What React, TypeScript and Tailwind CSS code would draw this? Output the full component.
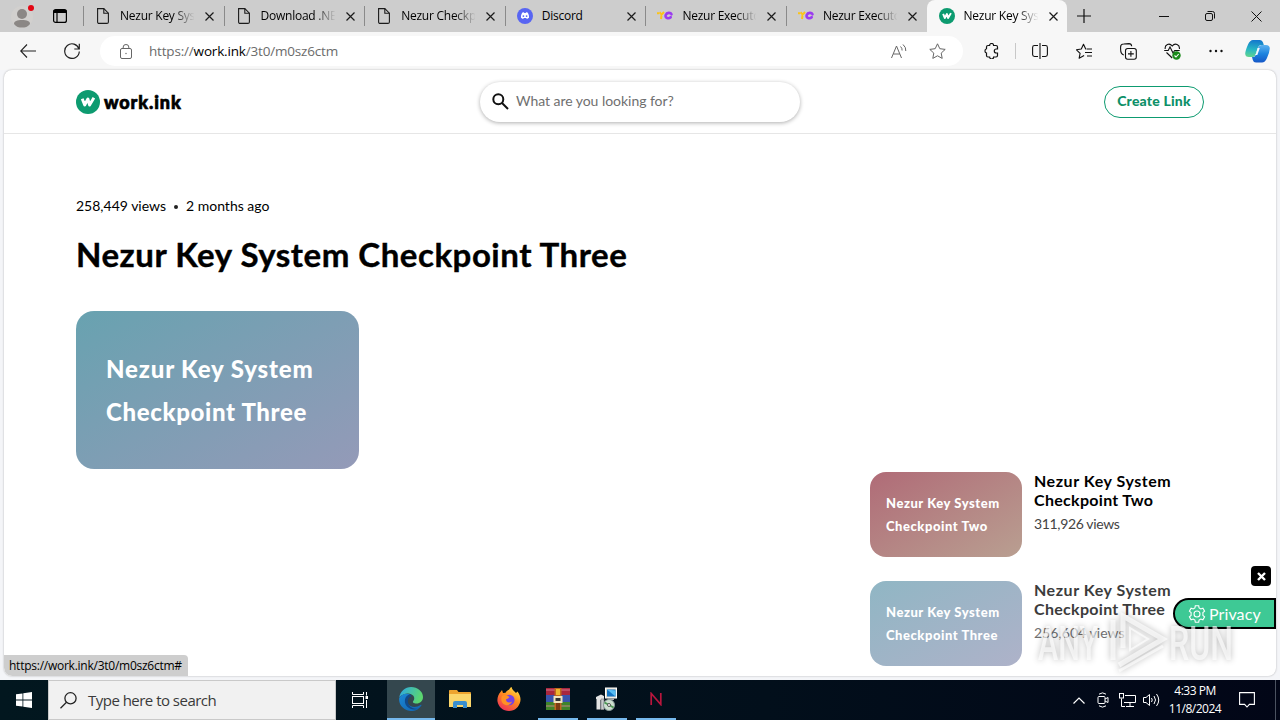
import type { ReactNode } from "react";
import { clsx } from "clsx";

type TabProps = {
    title: string;
    icon: ReactNode;
    active?: boolean;
    noFade?: boolean;
};

type RelatedProps = {
    thumb: [string, string];
    views: string;
    gradient: string;
    faded?: boolean;
};

function PageIcon() {
    return (
        <svg width="12" height="16" viewBox="0 0 12 16" fill="none" stroke="#1b1b1b" strokeWidth="1.1">
            <path d="M.6.6h6.2l4.6 4.6v8.700c0 .9-.6 1.500-1.500 1.500H2.100C1.200 15.400.6 14.800.6 13.900z" />
            <path d="M6.800.6v4.600h4.600" />
        </svg>
    );
}

function DiscordIcon() {
    return (
        <svg width="16" height="16" viewBox="0 0 16 16">
            <circle cx="8" cy="8" r="8" fill="#5865f2" />
            <path
                d="M5.400 4.600 6.900 4.300l.4.6h1.400l.4-.6 1.500.3c1.100 1.700 1.600 3.400 1.400 5.200-.8.7-1.500 1-2.200 1.200l-.5-.9H6.700l-.5.9c-.8-.2-1.500-.5-2.200-1.200-.2-1.800.3-3.500 1.400-5.200z"
                fill="#fff"
            />
            <circle cx="6.400" cy="8.100" r=".9" fill="#5865f2" />
            <circle cx="9.600" cy="8.100" r=".9" fill="#5865f2" />
        </svg>
    );
}

function YcIcon() {
    return (
        <svg width="18" height="12" viewBox="0 0 18 12" fill="none">
            <path d="M1 3.200h2M3.500 2.200l2.200 2.400L8 2M5.600 4.600 5 9" stroke="#fcc419" strokeWidth="2" />
            <path
                d="M15.500 4.300C14.600 2.300 10.800 2.300 9.700 5c-1.100 3 2.900 4.100 5 2.200"
                stroke="#9b3cf0"
                strokeWidth="2.600"
                strokeLinecap="round"
            />
        </svg>
    );
}

function WorkIcon({ size }: { size: number }) {
    return (
        <svg className="shrink-0" width={size} height={size} viewBox="0 0 24 24">
            <circle cx="12" cy="12" r="12" fill="#0d9b70" />
            <path
                d="M6.200 8.800 8.700 15l3.200-6 1.700 6 4.300-7.300"
                fill="none"
                stroke="#fff"
                strokeWidth="2.900"
                strokeLinejoin="round"
            />
        </svg>
    );
}

function CloseGlyph() {
    return (
        <svg width="9" height="9" viewBox="0 0 9 9" stroke="#1b1b1b" strokeWidth="1.200">
            <path d="M.5.5l8 8M8.500.5l-8 8" />
        </svg>
    );
}

function Tab({ title, icon, active, noFade }: TabProps) {
    return (
        <div
            className={clsx(
                "flex h-8 w-[140.600px] shrink-0 items-center",
                active && "rounded-t-lg bg-[#f7f7f7]"
            )}
        >
            <span className={clsx("h-5 w-px", active ? "bg-transparent" : "bg-[#8a8a8a]")} />
            <span className="ml-2.5 flex w-[18px] justify-center">{icon}</span>
            <span
                className={clsx(
                    "ml-[8px] w-[76px] overflow-hidden whitespace-nowrap text-[12px] tracking-[-0.25px] text-black",
                    !noFade && "[mask-image:linear-gradient(to_right,black_70%,transparent_98%)]"
                )}
            >
                {title}
            </span>
            <span className="ml-[9px]">
                <CloseGlyph />
            </span>
        </div>
    );
}

const tabs: TabProps[] = [
    { title: "Nezur Key System", icon: <PageIcon /> },
    { title: "Download .NET 8", icon: <PageIcon /> },
    { title: "Nezur Checkpoint", icon: <PageIcon /> },
    { title: "Discord", icon: <DiscordIcon />, noFade: true },
    { title: "Nezur Executor", icon: <YcIcon /> },
    { title: "Nezur Executor", icon: <YcIcon /> },
    { title: "Nezur Key System", icon: <WorkIcon size={16} />, active: true },
];

function TabStrip() {
    return (
        <div className="flex h-8 items-center bg-[#cdcdcd] font-['Open_Sans',sans-serif]">
            <svg className="ml-2.5" width="25" height="24" viewBox="0 0 25 24">
                <circle cx="12" cy="13" r="11" fill="#d2d0ce" />
                <circle cx="12" cy="10" r="5" fill="#8b8785" />
                <path d="M4 20c0-3 3-4 8-4s8 1 8 4c-2 3-5 3.500-8 3.500S6 23 4 20z" fill="#8b8785" />
                <circle cx="21" cy="4" r="3" fill="#e30613" />
            </svg>
            <svg className="ml-[18px]" width="14" height="14" viewBox="0 0 14 14" fill="none" stroke="#000" strokeWidth="1.200">
                <rect x=".6" y=".6" width="12.800" height="12.800" rx="2" />
                <path d="M.6 2.500h12.800" strokeWidth="3" />
                <path d="M4 3v10.500" />
            </svg>
            <div className="ml-4 flex">
                {tabs.map((tab, i) => (
                    <Tab key={i} {...tab} />
                ))}
            </div>
            <svg className="ml-[10px]" width="14" height="14" viewBox="0 0 14 14" stroke="#111" strokeWidth="1.200">
                <path d="M7 0v14M0 7h14" />
            </svg>
            <svg className="ml-[68px]" width="10" height="10" viewBox="0 0 10 10" stroke="#111">
                <path d="M0 5.500h10" />
            </svg>
            <svg className="ml-9" width="10" height="10" viewBox="0 0 10 10" fill="none" stroke="#111">
                <rect x=".5" y="2.500" width="7" height="7" rx="1.500" />
                <path d="M2.500.5h5a2 2 0 0 1 2 2v5" />
            </svg>
            <svg className="ml-9" width="11" height="11" viewBox="0 0 11 11" stroke="#111">
                <path d="M.5.5l10 10M10.500.5l-10 10" />
            </svg>
        </div>
    );
}

function Toolbar() {
    return (
        <div className="flex h-[38px] items-center bg-[#f7f7f7] font-['Open_Sans',sans-serif]">
            <svg className="ml-5" width="16" height="14" viewBox="0 0 16 14" fill="none" stroke="#222" strokeWidth="1.100">
                <path d="M7 .5.700 7 7 13.500M.7 7H16" />
            </svg>
            <svg className="ml-7" width="16" height="16" viewBox="0 0 16 16" fill="none" stroke="#222" strokeWidth="1.200">
                <path d="M15 6A7.300 7.300 0 1 0 15.300 8.500M15.300.8v5.200h-5" />
            </svg>
            <div className="ml-5 flex h-[30px] w-[863px] items-center rounded-full bg-white">
                <svg className="ml-5" width="12" height="15" viewBox="0 0 12 15" fill="none" stroke="#666">
                    <rect x=".5" y="4.500" width="11" height="10" rx="1.500" />
                    <path d="M3.200 4.500V3a2.800 2.500 0 0 1 5.600 0v1.500" />
                    <circle cx="6" cy="9.500" r=".7" fill="#666" stroke="none" />
                </svg>
                <span className="ml-[17px] w-[730px] text-[13.500px] tracking-[-0.18px] text-[#6b6b6b]">
                    https://<span className="text-black">work.ink</span>/3t0/m0sz6ctm
                </span>
                <svg className="ml-3" width="16" height="15" viewBox="0 0 16 15" fill="none" stroke="#666">
                    <path d="M.5 14 5.500 2l5 12M2.300 10h6.500M9.500 2.500q1.800 1.600 1.600 4M12 .5q3.200 2.800 2.800 6.500" />
                </svg>
                <svg className="ml-[22px]" width="17" height="16" viewBox="0 0 17 16" fill="none" stroke="#666" strokeLinejoin="round">
                    <path d="m8.500.8 2.300 4.900 5.400.7-4 3.700 1 5.300-4.700-2.600-4.700 2.600 1-5.300-4-3.700 5.400-.7z" />
                </svg>
            </div>
            <svg className="ml-[21px]" width="15" height="16" viewBox="0 0 15 16" fill="none" stroke="#111" strokeWidth="1.200">
                <path d="M4 2.500h1.600a2 2 0 0 1 4 0H12q1.500 0 1.500 1.500v2h-1.200a2 2 0 0 0 0 4h1.200v2.500q0 1.500-1.500 1.500H9.600a2 2 0 0 1-4 0H4q-1.500 0-1.500-1.500V10a2.200 2.200 0 0 1 0-4.200V4q0-1.500 1.500-1.500z" />
            </svg>
            <span className="ml-4 h-4 w-px bg-[#c8c8c8]" />
            <svg className="ml-4" width="16" height="16" viewBox="0 0 16 16" fill="none" stroke="#111" strokeWidth="1.100">
                <path d="M6 2.500H2.500q-1.900 0-1.900 1.900v7.200q0 1.900 1.900 1.900H6M10 2.500h3.500q1.900 0 1.900 1.900v7.200q0 1.900-1.900 1.900H10M8 0v16" />
            </svg>
            <svg className="ml-7" width="17" height="16" viewBox="0 0 17 16" fill="none" stroke="#111" strokeWidth="1.100" strokeLinejoin="round">
                <path d="M10 6H9.700L7.500 1.200 5.300 6l-4.800.8 3.600 3.500-1 5 5-2.700M10.500 6H16M9 9.500h7M11 13h5" />
            </svg>
            <svg className="ml-[27px]" width="17" height="17" viewBox="0 0 17 17" fill="none" stroke="#111" strokeWidth="1.100">
                <rect x="5.500" y="5.500" width="10.800" height="10.800" rx="2.200" />
                <path d="M10.900 8v5.800M8 10.900h5.800M3.800 12C1.800 11.500.6 9 .6 6V4Q.6 1 3.600 1L9 .6q2.400 0 2.700 2.600" />
            </svg>
            <svg className="ml-[27px]" width="17" height="17" viewBox="0 0 17 17" fill="none" stroke="#111" strokeWidth="1.100">
                <path d="M1.200 6C.5 1.500 5.500-.5 8.200 3 11-.5 16 1.500 15.400 6M2.500 9.500 8.200 15M.2 7.500h4L6 4l3 6 1.700-2.500h5" />
                <circle cx="12.500" cy="12.500" r="4.200" fill="#1b8a1b" stroke="none" />
                <path d="m10.500 12.500 1.500 1.500 2.700-3" stroke="#fff" />
            </svg>
            <svg className="ml-[28px]" width="14" height="4" viewBox="0 0 14 4" fill="#111">
                <circle cx="1.500" cy="2" r="1.200" />
                <circle cx="7" cy="2" r="1.200" />
                <circle cx="12.500" cy="2" r="1.200" />
            </svg>
            <svg className="ml-[22px]" width="25" height="23" viewBox="0 0 25 23">
                <defs>
                    <linearGradient id="cpA" x1=".3" y1="0" x2=".2" y2="1">
                        <stop offset="0" stopColor="#1479cd" />
                        <stop offset=".55" stopColor="#28b7c3" />
                        <stop offset="1" stopColor="#63d68e" />
                    </linearGradient>
                    <linearGradient id="cpB" x1="0" y1="0" x2="0" y2="1">
                        <stop offset="0" stopColor="#5db2f0" />
                        <stop offset=".5" stopColor="#1c84df" />
                        <stop offset="1" stopColor="#1557c7" />
                    </linearGradient>
                </defs>
                <path d="M8 0h7q2.300 0 3 2.500l.8 2.500H16q-2.200 0-3 2.500L10.500 15q-.8 2-3 2H4Q.2 17 .2 13.500.3 11 3 4.500 5 0 8 0z" fill="url(#cpA)" />
                <path d="M17 22.500h-6q-2.500 0-3.200-2.500L7 17h1q2.200 0 3-2.500L13.200 7.500q.8-2.500 3.300-2.500H21q3.800 0 3.800 3.500-.3 4-2.800 9.500-2 4.500-5 4.500z" fill="url(#cpB)" />
                <path d="M12.600 8h2.200L12.300 15H9.800q.8-.4 1.200-1.600z" fill="#f3f9ff" />
            </svg>
        </div>
    );
}

function SiteHeader() {
    return (
        <header className="flex h-16 shrink-0 items-center justify-between border-b border-[#e6e6e6] px-[72px]">
            <div className="flex w-[100px] items-center gap-1">
                <WorkIcon size={24} />
                <span className="text-[18px] font-black leading-6 tracking-[0.900px] [-webkit-text-stroke:0.700px_black]">work.ink</span>
            </div>
            <div className="flex h-10 w-80 items-center rounded-full bg-white pl-3 shadow-[0_1px_4px_rgba(0,0,0,0.32)]">
                <svg width="17" height="17" viewBox="0 0 17 17" fill="none" stroke="#111" strokeWidth="2">
                    <circle cx="6.300" cy="6.300" r="5" />
                    <path d="m10 10 6 6" />
                </svg>
                <span className="-mt-0.5 ml-[7px] text-[14px] tracking-[-0.040px] text-[#6f6f6f]">What are you looking for?</span>
            </div>
            <button className="h-8 w-[100px] whitespace-nowrap rounded-full border border-[#0d9b70] pb-0.5 text-[14px] font-black tracking-[0.200px] text-[#0d9068]">
                Create Link
            </button>
        </header>
    );
}

function Related({ thumb, views, gradient, faded }: RelatedProps) {
    return (
        <div className="flex h-[85px]">
            <div
                className={clsx(
                    "flex w-[152px] flex-col justify-center rounded-[16px] pl-4 text-[13px] font-black leading-[23px] tracking-[0.540px] text-white",
                    gradient
                )}
            >
                <span>{thumb[0]}</span>
                <span>{thumb[1]}</span>
            </div>
            <div className={clsx("ml-3 whitespace-nowrap", faded ? "text-[#3c3c3c]" : "text-black")}>
                <h3 className="-mt-px text-[16px] font-bold leading-[19px]">
                    <span className="tracking-[0.540px]">{thumb[0]}</span>
                    <br />
                    <span className="tracking-[0.300px]">{thumb[1]}</span>
                </h3>
                <p
                    className={clsx(
                        "mt-[5px] text-[14px] leading-5",
                        faded ? "tracking-[0.050px] text-[#707070]" : "tracking-[-0.350px] text-[#444]"
                    )}
                >
                    {views}
                </p>
            </div>
        </div>
    );
}

function Watermark() {
    return (
        <svg
            className="absolute left-[1028px] top-[536px] drop-shadow-[0_0_3px_rgba(0,0,0,0.4)]"
            width="214"
            height="70"
            viewBox="0 0 214 70"
            fill="#fff"
            fillOpacity=".65"
            fontFamily="Roboto, sans-serif"
            fontSize="49"
            fontWeight="500"
        >
            <text x="6" y="54" textLength="60" lengthAdjust="spacingAndGlyphs">
                ANY
            </text>
            <text x="137" y="54" textLength="64" lengthAdjust="spacingAndGlyphs">
                RUN
            </text>
            <g fill="none" stroke="#fff" strokeOpacity=".65" strokeWidth="5">
                <path d="M81 14v40" />
                <path d="M91 42V10l40 23-44 26" />
                <path d="M87 65 131 40" strokeWidth="3" />
                <path d="M98 22v22l18-11z" strokeWidth="2" />
            </g>
        </svg>
    );
}

function WorkInkPage() {
    return (
        <div className="relative mx-1 flex h-[606px] flex-col overflow-hidden rounded-lg bg-white font-['Lato',sans-serif] shadow-[0_0_2px_rgba(0,0,0,0.3)]">
            <SiteHeader />
            <main className="flex-1 px-[72px] pt-[61px]">
                <div className="flex h-5 items-center text-[14px] text-black">
                    <span className="w-[90px] whitespace-nowrap">258,449 views</span>
                    <span className="mx-2 mt-[3px] h-1 w-1 rounded-full bg-[#222]" />
                    <span>2 months ago</span>
                </div>
                <h1 className="mt-[18px] whitespace-nowrap text-[33px] font-bold leading-[42px] tracking-[0.530px] text-black [-webkit-text-stroke:0.400px_black]">
                    Nezur Key System Checkpoint Three
                </h1>
                <div className="mt-[36px] flex h-[158px] w-[283px] flex-col justify-center rounded-[18px] bg-[linear-gradient(150deg,#68a2b0,#949ab8)] pl-[30px] text-[24px] font-black leading-[43px] text-white">
                    <span className="tracking-[0.850px]">Nezur Key System</span>
                    <span className="tracking-[0.650px]">Checkpoint Three</span>
                </div>
                <aside className="ml-[794px] mt-[3px] flex flex-col gap-6">
                    <Related
                        thumb={["Nezur Key System", "Checkpoint Two"]}
                        views="311,926 views"
                        gradient="bg-[linear-gradient(150deg,#b06b77,#b99f91)]"
                    />
                    <Related
                        thumb={["Nezur Key System", "Checkpoint Three"]}
                        views="256,604 views"
                        gradient="bg-[linear-gradient(150deg,#90b6c4,#aeb2c9)]"
                        faded
                    />
                </aside>
            </main>
            <div className="absolute left-[1247px] top-[496px] flex h-5 w-5 items-center justify-center rounded bg-black">
                <svg width="9" height="9" viewBox="0 0 9 9" stroke="#fff" strokeWidth="2.400">
                    <path d="m1 1 7 7M8 1 1 8" />
                </svg>
            </div>
            <div className="absolute left-[1169px] top-[528px] flex h-[31px] w-[103px] items-center rounded-l-full rounded-r-[2px] border-2 border-black bg-[#3ec995] pl-[13px] text-[16px] text-white">
                <svg width="18" height="18" viewBox="0 0 18 18" fill="none" stroke="#fff" strokeWidth="1.100">
                    <circle cx="9" cy="9" r="3" />
                    <path d="M7.300.8h3.400l.4 2.200 1.700 1 2.100-.8 1.700 3-1.700 1.400v2.800l1.700 1.400-1.700 3-2.100-.8-1.700 1-.4 2.200H7.300L6.900 15l-1.700-1-2.100.8-1.700-3 1.700-1.400V7.600L1.400 6.200l1.700-3 2.100.8 1.700-1z" />
                </svg>
                <span className="ml-[3px] tracking-[0.100px]">Privacy</span>
            </div>
            <Watermark />
            <div className="absolute bottom-0 left-0 flex h-[21px] w-[184px] items-center rounded-bl-lg rounded-tr bg-[#cecece] pl-[5px] font-['Open_Sans',sans-serif] text-[12px] tracking-[-0.250px] text-black">
                https://work.ink/3t0/m0sz6ctm#
            </div>
        </div>
    );
}

function TaskCell({ children, active, running }: { children: ReactNode; active?: boolean; running?: boolean }) {
    return (
        <div className={clsx("mr-px flex h-10 w-12 flex-col items-center", active && "bg-[#34474e]")}>
            <div className="flex h-[38px] items-center justify-center">{children}</div>
            <span className={clsx("h-0.5", active ? "w-12 bg-[#76b9ed]" : "w-10", running && "bg-[#76b9ed]")} />
        </div>
    );
}

function Taskbar() {
    return (
        <div className="flex h-10 items-center bg-[linear-gradient(90deg,#02171f,#020f1b_60%,#020617)] font-['Open_Sans',sans-serif] text-white">
            <div className="flex w-12 justify-center">
                <svg width="16" height="16" viewBox="0 0 16 16" fill="#fff">
                    <path d="M0 2.300 6.500 1.400v6.200H0zM7.300 1.300 16 0v7.600H7.300zM0 8.400h6.500v6.200L0 13.700zM7.300 8.400H16V16l-8.700-1.300z" />
                </svg>
            </div>
            <div className="flex h-10 w-72 items-center border border-[#c9c9c9] bg-[#f1f1f1] text-[15px] text-[#3a3a3a]">
                <svg className="ml-[11px]" width="17" height="17" viewBox="0 0 17 17" fill="none" stroke="#222" strokeWidth="1.300">
                    <circle cx="10.500" cy="6.300" r="5.600" />
                    <path d="M6.500 10.300.5 16.300" />
                </svg>
                <span className="ml-[11px] tracking-[-0.520px]">Type here to search</span>
            </div>
            <svg className="ml-4 mr-[19px]" width="16" height="16" viewBox="0 0 16 16" fill="none" stroke="#fff">
                <path d="M.5 0v2.500h11V0M.5 16v-2.500h11V16M14.500 0v3.500M14.500 8v8" />
                <rect x=".5" y="4.500" width="11" height="7" />
                <rect x="14" y="4.500" width="1.500" height="2" fill="#fff" />
            </svg>
            <TaskCell active>
                <svg width="24" height="24" viewBox="0 0 24 24">
                    <defs>
                        <linearGradient id="edgeTop" x1="0" y1="0" x2="1" y2=".3">
                            <stop offset="0" stopColor="#2ba7e8" />
                            <stop offset="1" stopColor="#5bd66f" />
                        </linearGradient>
                        <linearGradient id="edgeLow" x1="0" y1="0" x2="1" y2="1">
                            <stop offset="0" stopColor="#1b88d6" />
                            <stop offset="1" stopColor="#1262ad" />
                        </linearGradient>
                    </defs>
                    <path d="M.3 10.500C1.300 4.500 6 0 12.200 0 18.500 0 24 4.500 24 10c0 4-3 6.500-6.500 6.500-3 0-4.300-1.200-3.200-2.500 3-4-1.300-8-6-7.500C4.500 7 1.500 8.500.3 10.500z" fill="url(#edgeTop)" />
                    <path d="M.2 11C2 7.500 7 5.500 11 7.500c-4 2-4.500 6-2.500 9 2.700 4 8.500 4.500 13 1.500.8-.4 1.200.1.800.8C19 23.500 14 25 9 23.500 3 21.500-.5 16.500.2 11z" fill="url(#edgeLow)" />
                    <path d="M11 7.500C6 8 4 15 8 19.500c3 3.300 8 3.500 11 2.200C12 23 7 16 9.500 11.500 10 10.400 11 9.500 12.500 9.600 12.400 8.800 12 8 11 7.500z" fill="#114a8b" />
                </svg>
            </TaskCell>
            <TaskCell>
                <svg width="22" height="20" viewBox="0 0 22 20">
                    <path d="M0 1.500Q0 1 .8 1H8l1.500 2H21q1 0 1 1v14H0z" fill="#eda42f" />
                    <path d="M0 5h22v13H0z" fill="#fbd66b" />
                    <path d="M4 19v-5q0-2 2-2h10q2 0 2 2v5h-4v-3H8v3z" fill="#3a8fd0" />
                </svg>
            </TaskCell>
            <TaskCell>
                <svg width="24" height="24" viewBox="0 0 24 24">
                    <defs>
                        <linearGradient id="fox" x1=".8" y1="0" x2=".2" y2="1">
                            <stop offset="0" stopColor="#ffe14a" />
                            <stop offset=".45" stopColor="#ff8a1e" />
                            <stop offset="1" stopColor="#ee2b5d" />
                        </linearGradient>
                    </defs>
                    <path d="M3.500 5 5 3l1 3 2.500-.2C9.500 4 11 3 12 2.800 13 .5 14.500 0 14.500 0c.5 3 2.500 3.500 4.500 6l1.500-1.500C23 8 24 11 23.300 14.500 22 20 18 24 12 24S1.500 20 .5 14.500C0 11 1.500 7 3.500 5z" fill="url(#fox)" />
                    <circle cx="12.300" cy="13" r="5.300" fill="#7542e5" />
                    <path d="M5 9c2-2 5-1 7.500 1-1 2-3 1.500-3.500 2.500 0 3 3.500 4 6 2-1 4-7 5-9.500 1.500C4 14 4 11 5 9z" fill="#ff9125" />
                </svg>
            </TaskCell>
            <TaskCell running>
                <svg width="24" height="22" viewBox="0 0 24 22">
                    <path d="M0 0h24v7H0z" fill="#a8273f" />
                    <path d="M0 7h24v7H0z" fill="#3954ad" />
                    <path d="M0 14h24v8H0z" fill="#3f842a" />
                    <path d="M0 2h24M0 18h24" stroke="#df8ba0" strokeWidth=".8" />
                    <path d="M8.500 0h7v22h-7z" fill="#c1671d" />
                    <path d="M10 1h4v6h-4z" fill="#edb72f" />
                    <path d="M7.500 8h9v7h-9z" fill="#f0e3bd" />
                    <path d="M9.500 10h5v3h-5z" fill="#333" />
                    <path d="M10 15h4v7h-4z" fill="#7b3c14" />
                </svg>
            </TaskCell>
            <TaskCell running>
                <svg width="24" height="24" viewBox="0 0 24 24">
                    <rect x="10.500" y="1" width="11" height="10" fill="#ddd8c9" stroke="#fff" />
                    <path d="M12 2.500h8.500v7H12z" fill="#1675c5" />
                    <path d="m12 2.500 8.500 1v6z" fill="#56bdf4" />
                    <path d="M13 11.500h6v1.500h-6z" fill="#aaa" />
                    <path d="M1 10 6 7.500 9 9v13.500H5.500V13H5v9.500H1.500V12H1z" fill="#e3e3e3" />
                    <path d="M6 12h3v10.500H6z" fill="#c7c9cc" stroke="#777" strokeWidth=".6" />
                    <circle cx="14" cy="18" r="5.500" fill="#cde0d0" stroke="#899" />
                    <path d="M14 18l-4.500-2.500M14 18l4.500 2.500" stroke="#4d9955" strokeWidth="2" />
                    <circle cx="14" cy="18" r="1.500" fill="#fff" stroke="#555" />
                </svg>
            </TaskCell>
            <TaskCell running>
                <svg width="12" height="14" viewBox="0 0 12 14" fill="none" stroke="#b8163d" strokeWidth="1.700">
                    <path d="M1.200 13V1.500L10.800 12.500V1" />
                </svg>
            </TaskCell>
            <div className="ml-auto flex items-center">
                <svg width="12" height="7" viewBox="0 0 12 7" fill="none" stroke="#fff" strokeWidth="1.200">
                    <path d="m.5 6.500 5.500-5.500 5.500 5.500" />
                </svg>
                <svg className="ml-3" width="12" height="16" viewBox="0 0 12 16" fill="none" stroke="#fff">
                    <rect x="1" y="4.500" width="7" height="7" rx="1" />
                    <path d="m8 7 3-1.500v5L8 9M2 2.200Q5.500-.5 9 2.200M2 13.800q3.500 2.700 7 0" />
                </svg>
                <svg className="ml-2.5" width="17" height="14" viewBox="0 0 17 14" fill="none" stroke="#fff">
                    <path d="M6 2.500h10.500v7H5M11 9.500V13M7 13.500h8M2.500 5.500v8H6" />
                    <rect x=".5" y=".5" width="4" height="4.500" />
                </svg>
                <svg className="ml-[7px]" width="17" height="14" viewBox="0 0 17 14" fill="none" stroke="#fff">
                    <path d="M.5 4.500H3l3.500-3v11L3 9.500H.5zM8.500 5q1.500 2 0 4M11 3q3 4 0 8M13.500 1q4.500 6 0 12" />
                </svg>
                <div className="ml-[7px] flex w-[56px] flex-col items-center whitespace-nowrap text-[12px] leading-[18px] tracking-[-0.5px]">
                    <span>4:33 PM</span>
                    <span>11/8/2024</span>
                </div>
                <svg className="ml-4" width="16" height="16" viewBox="0 0 16 16" fill="none" stroke="#fff" strokeWidth="1.100">
                    <path d="M.6.6h14.800v11.800h-5L8 15l-2.400-2.600h-5z" />
                </svg>
                <span className="ml-5 mr-1 h-10 w-px bg-[#4b5260]" />
            </div>
        </div>
    );
}

export default function App() {
    return (
        <div className="h-[720px] w-[1280px] overflow-hidden bg-[#f4f5f8]">
            <TabStrip />
            <Toolbar />
            <WorkInkPage />
            <div className="h-1" />
            <Taskbar />
        </div>
    );
}
